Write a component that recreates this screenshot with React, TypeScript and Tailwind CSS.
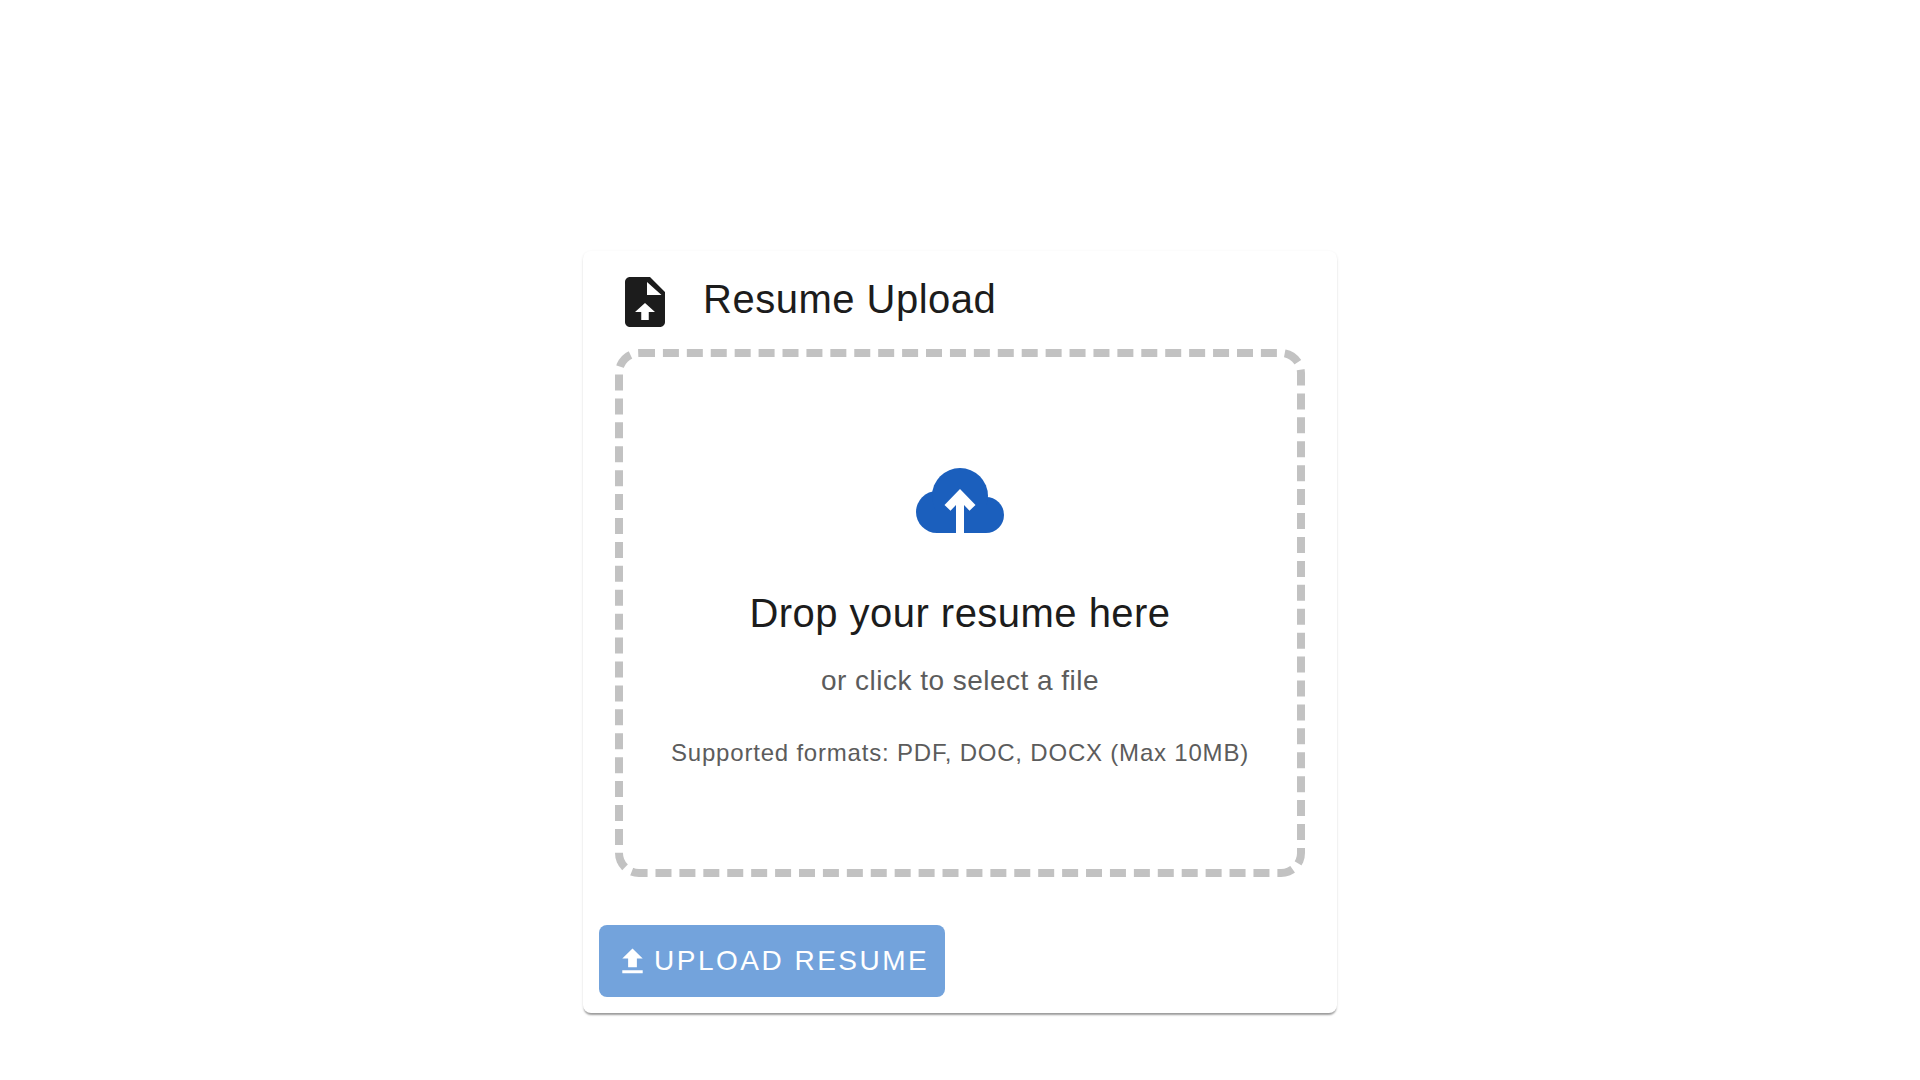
export default function App() {
  return (
    <div className="min-h-screen bg-white pt-[251px] font-['Liberation_Sans',Arial,sans-serif]">
      <div className="mx-auto flex h-[762px] w-[754px] flex-col rounded-[8px] bg-white px-4 shadow-[0_3px_2px_-1px_rgba(0,0,0,0.35),0_1px_3px_0_rgba(0,0,0,0.1)]">
        <div className="flex h-[98px] items-start pl-4">
          <svg viewBox="0 0 24 24" className="mt-[21px] h-[60px] w-[60px]" fill="#1c1c1c">
            <path fillRule="evenodd" d="M14 2H6c-1.1 0-1.99.9-1.99 2L4 20c0 1.1.89 2 1.99 2H18c1.1 0 2-.9 2-2V8l-6-6zM12.8 4l5.8 5.2h-5.8V4zM12 12.4 16 16h-2.5v3.2h-3V16H8l4-3.6z" />
          </svg>
          <h1 className="ml-[28px] mt-[24px] text-[40px] leading-[48px] tracking-[0.5px] text-[#1c1c1c]">Resume Upload</h1>
        </div>
        <div className="mx-4 flex h-[528px] flex-col items-center rounded-[24px] border-8 border-dashed border-[#c2c2c2] pt-[111px]">
          <svg viewBox="0 0 88 65" className="h-[65px] w-[88px]" fill="#1b5fbd">
            <circle cx="21" cy="44" r="21" />
            <circle cx="70" cy="47" r="18" />
            <circle cx="44" cy="28" r="28" />
            <rect x="21" y="30" width="49" height="35" />
            <path fill="#ffffff" d="M44 21 59.5 37 53.5 42.7 48 37V65H40V37L34.5 42.7 28.5 37Z" />
          </svg>
          <div className="mt-[56px] text-[40px] leading-[48px] tracking-[0.47px] text-[#1c1c1c]">Drop your resume here</div>
          <div className="mt-[28px] text-[28px] leading-[32px] tracking-[0.48px] text-[#5c5c5c]">or click to select a file</div>
          <div className="mt-[40px] text-[24px] leading-[32px] tracking-[0.8px] text-[#5c5c5c]">Supported formats: PDF, DOC, DOCX (Max 10MB)</div>
        </div>
        <button className="mt-[48px] flex h-[72px] w-[346px] items-center rounded-[8px] bg-[#73a3dc] pl-4 text-[28px] tracking-[2.5px] text-white">
          <svg viewBox="0 0 24 24" className="h-[35px] w-[35px]" fill="#ffffff">
            <path d="M5 20h14v-2H5v2zm0-10h4v6h6v-6h4l-7-7-7 7z" />
          </svg>
          <span className="ml-[4px]">UPLOAD RESUME</span>
        </button>
      </div>
    </div>
  );
}
